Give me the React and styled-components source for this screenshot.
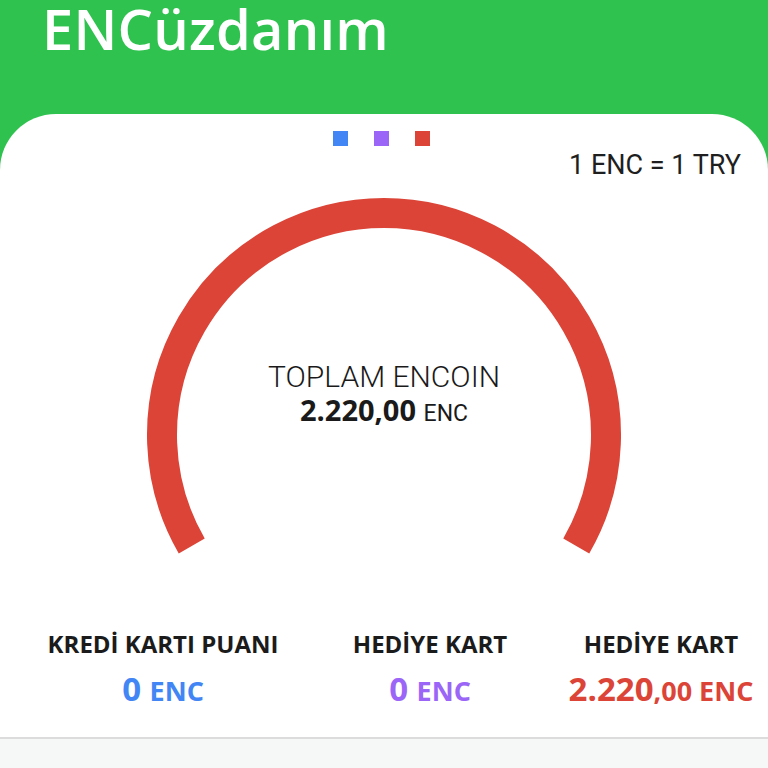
import React from "react";
import styled, { createGlobalStyle } from "styled-components";

const Global = createGlobalStyle`
  html, body { margin: 0; padding: 0; background: #f6f7f7; }
  body { font-family: Roboto, "Noto Sans", sans-serif; }
`;

const Page = styled.div`
  width: 768px;
  height: 768px;
  overflow: hidden;
  background: #2fc24f;
  display: flex;
  flex-direction: column;
`;

const Header = styled.header`
  height: 114px;
  flex: none;
  padding-left: 42px;
  box-sizing: border-box;
`;

const Title = styled.h1`
  margin: 0;
  margin-top: -6px;
  font-family: "Open Sans", sans-serif;
  font-weight: 600;
  font-size: 56px;
  line-height: 68px;
  color: #ffffff;
  letter-spacing: 0.2px;
`;

const Card = styled.section`
  background: #ffffff;
  border-radius: 56px 56px 0 0;
  display: flex;
  flex-direction: column;
  flex: 1;
  box-sizing: border-box;
  padding-top: 17px;
`;

const Dots = styled.div`
  display: flex;
  justify-content: center;
  gap: 26px;
  padding-right: 6px;
`;

const Dot = styled.span`
  width: 15px;
  height: 15px;
  background: ${(p) => p.$color};
`;

const Rate = styled.div`
  align-self: flex-end;
  margin-right: 27px;
  margin-top: 2px;
  font-size: 27px;
  line-height: 34px;
  color: #1f1f1f;
`;

const Gauge = styled.div`
  position: relative;
  align-self: center;
  width: 480px;
  height: 365px;
  margin-top: 16px;
  flex: none;
`;

const GaugeText = styled.div`
  position: absolute;
  left: 0;
  right: 0;
  top: 163px;
  text-align: center;
  color: #1a1a1a;
`;

const GaugeLabel = styled.div`
  font-family: Roboto, sans-serif;
  font-weight: 300;
  font-size: 30px;
  line-height: 31px;
`;

const GaugeValue = styled.div`
  font-size: 29px;
  line-height: 36px;
  font-family: "Open Sans", sans-serif;
  b { font-weight: 700; }
  span { font-weight: 400; font-size: 23px; font-family: Roboto, sans-serif; }
`;

const Stats = styled.div`
  display: grid;
  grid-template-columns: 326px 208px 1fr;
  margin-top: 66px;
`;

const Stat = styled.div`
  display: flex;
  flex-direction: column;
  align-items: center;
  padding-left: ${(p) => p.$pl || 0}px;
`;

const StatLabel = styled.div`
  font-family: "Open Sans", sans-serif;
  font-weight: 700;
  font-size: 24px;
  line-height: 30px;
  color: #1b1b1b;
  white-space: nowrap;
`;

const StatValue = styled.div`
  margin-top: 12px;
  font-family: "Open Sans", sans-serif;
  font-weight: 700;
  font-size: 33px;
  line-height: 36px;
  color: ${(p) => p.$color};
  white-space: nowrap;
  small { font-size: 27px; }
`;

const Footer = styled.div`
  flex: 1;
  margin-top: 28px;
  background: #f6f7f7;
  border-top: 2px solid #dcdcdc;
`;

const RED = "#db4437";

function Arc() {
  const cx = 240, cy = 237, r = 222;
  const a0 = (210 * Math.PI) / 180;
  const a1 = (-30 * Math.PI) / 180;
  const x0 = cx + r * Math.cos(a0), y0 = cy - r * Math.sin(a0);
  const x1 = cx + r * Math.cos(a1), y1 = cy - r * Math.sin(a1);
  return (
    <svg width="480" height="365" viewBox="0 0 480 365">
      <path
        d={`M ${x0} ${y0} A ${r} ${r} 0 1 1 ${x1} ${y1}`}
        fill="none"
        stroke={RED}
        strokeWidth="30"
      />
    </svg>
  );
}

export default function App() {
  return (
    <>
      <Global />
      <Page>
        <Header>
          <Title>ENCüzdanım</Title>
        </Header>
        <Card>
          <Dots>
            <Dot $color="#4285f4" />
            <Dot $color="#9b66f7" />
            <Dot $color={RED} />
          </Dots>
          <Rate>1 ENC = 1 TRY</Rate>
          <Gauge>
            <Arc />
            <GaugeText>
              <GaugeLabel>TOPLAM ENCOIN</GaugeLabel>
              <GaugeValue>
                <b>2.220,00</b> <span>ENC</span>
              </GaugeValue>
            </GaugeText>
          </Gauge>
          <Stats>
            <Stat>
              <StatLabel>KREDİ KARTI PUANI</StatLabel>
              <StatValue $color="#4285f4">
                0 <small>ENC</small>
              </StatValue>
            </Stat>
            <Stat>
              <StatLabel>HEDİYE KART</StatLabel>
              <StatValue $color="#9b66f7">
                0 <small>ENC</small>
              </StatValue>
            </Stat>
            <Stat $pl={20}>
              <StatLabel>HEDİYE KART</StatLabel>
              <StatValue $color={RED}>
                2.220<small>,00 ENC</small>
              </StatValue>
            </Stat>
          </Stats>
          <Footer />
        </Card>
      </Page>
    </>
  );
}
